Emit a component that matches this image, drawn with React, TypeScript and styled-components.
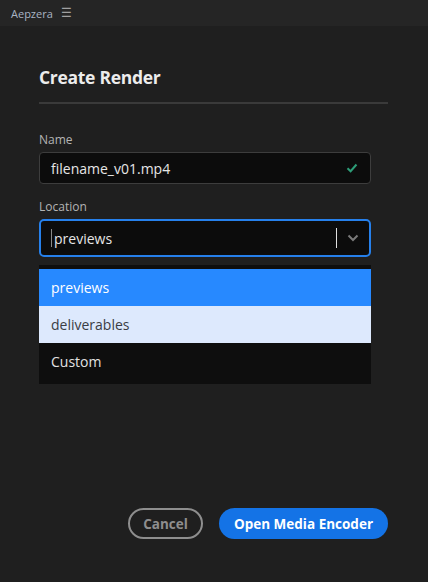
import React from "react";
import styled, { createGlobalStyle } from "styled-components";

const Global = createGlobalStyle`
  html, body { margin: 0; padding: 0; background: #1f1f1f; }
  * { box-sizing: border-box; }
  body { font-family: "Open Sans", "Noto Sans", sans-serif; }
`;

const Page = styled.div`
  width: 428px;
  height: 582px;
  display: flex;
  flex-direction: column;
  background: #1f1f1f;
  color: #e8e8e8;
`;

const TopBar = styled.div`
  height: 26px;
  flex: none;
  display: flex;
  align-items: center;
  gap: 8px;
  padding-left: 11px;
  background: #252525;
  font-size: 11px;
  color: #a9b4c4;
`;

const Menu = styled.span`
  font-size: 12px;
  color: #a0a0a0;
  line-height: 1;
`;

const Body = styled.div`
  flex: 1;
  display: flex;
  flex-direction: column;
  padding: 39px 40px 43px 39px;
`;

const Title = styled.h1`
  margin: 0;
  font-size: 17.5px;
  line-height: 24px;
  font-weight: 700;
  color: #ececec;
  letter-spacing: -0.3px;
`;

const Divider = styled.div`
  margin-top: 13px;
  height: 2px;
  background: #3a3a3a;
`;

const Field = styled.div<{ $top: number }>`
  margin-top: ${(p) => p.$top}px;
  width: 332px;
  display: flex;
  flex-direction: column;
  gap: 4px;
`;

const Label = styled.label`
  font-size: 12px;
  line-height: 16px;
  color: #b4b4b4;
`;

const InputBox = styled.div`
  height: 32px;
  display: flex;
  align-items: center;
  padding: 0 12px 0 11px;
  background: #0c0c0c;
  border: 1px solid #3d3d3d;
  border-radius: 4px;
  font-size: 14px;
  color: #e6e6e6;
`;

const Grow = styled.span`
  flex: 1;
`;

const SelectBox = styled.div`
  height: 38px;
  display: flex;
  align-items: center;
  padding: 0 10px 0 10px;
  background: #0c0c0c;
  border: 2px solid #2680eb;
  border-radius: 5px;
  font-size: 14px;
  color: #e6e6e6;
`;

const Caret = styled.span`
  width: 1px;
  height: 18px;
  background: #8a8a8a;
  margin-right: 2px;
`;

const Sep = styled.span`
  width: 1px;
  height: 20px;
  background: #e0e0e0;
  margin-right: 10px;
`;

const List = styled.div`
  margin-top: 8px;
  width: 332px;
  padding: 4px 0;
  background: #0e0e0e;
  display: flex;
  flex-direction: column;
`;

const Item = styled.div<{ $kind: "selected" | "hover" | "plain" }>`
  height: 37px;
  display: flex;
  align-items: center;
  padding-left: 12px;
  font-size: 14px;
  background: ${(p) =>
    p.$kind === "selected" ? "#2789ff" : p.$kind === "hover" ? "#dde9fd" : "transparent"};
  color: ${(p) =>
    p.$kind === "selected" ? "#ffffff" : p.$kind === "hover" ? "#3a3d44" : "#e2e2e2"};
`;

const Footer = styled.div`
  margin-top: auto;
  display: flex;
  justify-content: flex-end;
  gap: 16px;
`;

const Button = styled.button<{ $primary?: boolean }>`
  height: 31px;
  border-radius: 16px;
  font-family: inherit;
  font-weight: 700;
  font-size: 13.5px;
  padding: 0;
  cursor: pointer;
  width: ${(p) => (p.$primary ? "169px" : "75px")};
  background: ${(p) => (p.$primary ? "#1473e6" : "transparent")};
  color: ${(p) => (p.$primary ? "#ffffff" : "#8e8e8e")};
  border: ${(p) => (p.$primary ? "none" : "2px solid #8e8e8e")};
`;

export default function App() {
  return (
    <Page>
      <Global />
      <TopBar>
        <span>Aepzera</span>
        <Menu>☰</Menu>
      </TopBar>
      <Body>
        <Title>Create Render</Title>
        <Divider />
        <Field $top={28}>
          <Label>Name</Label>
          <InputBox>
            <Grow>filename_v01.mp4</Grow>
            <svg width="12" height="10" viewBox="0 0 12 10">
              <path d="M1.5 5.2 L4.6 8.2 L10.5 1.5" fill="none" stroke="#2d9d78" strokeWidth="2" />
            </svg>
          </InputBox>
        </Field>
        <Field $top={15}>
          <Label>Location</Label>
          <SelectBox>
            <Caret />
            <Grow>previews</Grow>
            <Sep />
            <svg width="12" height="8" viewBox="0 0 12 8">
              <path d="M1.5 1.5 L6 6 L10.5 1.5" fill="none" stroke="#7a7a7a" strokeWidth="2" />
            </svg>
          </SelectBox>
        </Field>
        <List>
          <Item $kind="selected">previews</Item>
          <Item $kind="hover">deliverables</Item>
          <Item $kind="plain">Custom</Item>
        </List>
        <Footer>
          <Button>Cancel</Button>
          <Button $primary>Open Media Encoder</Button>
        </Footer>
      </Body>
    </Page>
  );
}
